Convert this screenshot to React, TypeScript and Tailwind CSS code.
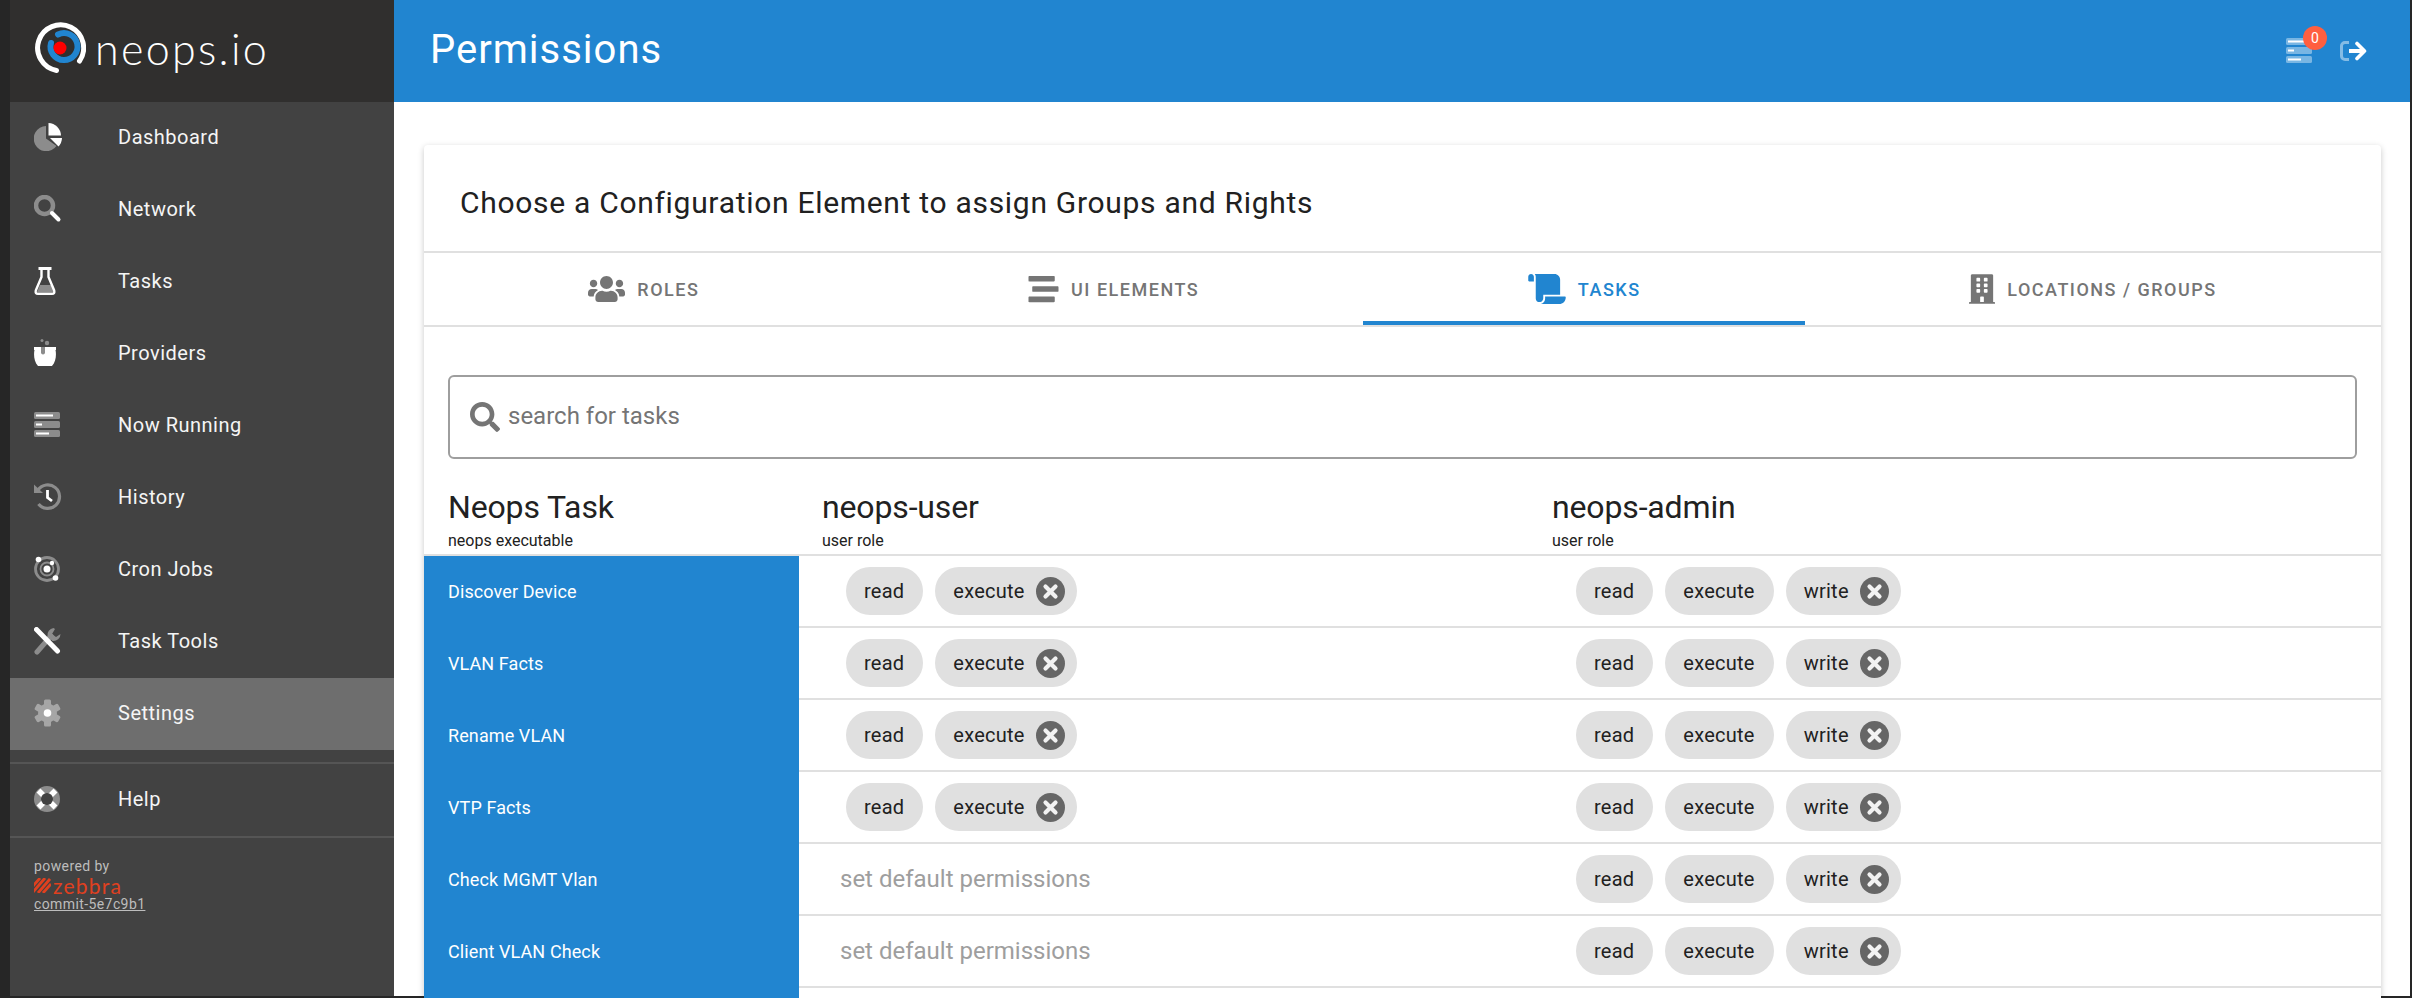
import type { ReactNode } from "react";
import { FaBuilding, FaScroll, FaSearch, FaStream, FaUsers } from "react-icons/fa";

const GRAY = "#8c8c8c";

const PieIcon = () => (
  <svg width="28" height="28" viewBox="0 0 28 28">
    <path d="M12 3A12.6 12.6 0 1 0 22.5 23L12 15.5Z" fill={GRAY} />
    <path d="M14.5 0A13 13 0 0 1 27 12.5L14.5 12.5Z" fill="#fff" />
    <path d="M16 15H28A13 13 0 0 1 24.500 23.500Z" fill="#fff" />
  </svg>
);

const SearchIcon = () => (
  <svg width="28" height="28" viewBox="0 0 28 28">
    <circle cx="10.500" cy="10.500" r="8.500" fill="none" stroke={GRAY} strokeWidth="4.500" />
    <path d="M18 18L24.500 24.500" stroke="#fff" strokeWidth="4" strokeLinecap="round" />
  </svg>
);

const FlaskIcon = () => (
  <svg width="28" height="28" viewBox="0 0 28 28">
    <path d="M6 18H18L21 25H3Z" fill={GRAY} />
    <rect x="4.500" y="0" width="13" height="3" fill="#fff" />
    <path
      d="M7.500 3V10L1.800 23.500Q1 26.800 4 26.800H18Q21 26.800 20.200 23.500L14.500 10V3"
      fill="none"
      stroke="#fff"
      strokeWidth="2.400"
    />
  </svg>
);

const CauldronIcon = () => (
  <svg width="28" height="28" viewBox="0 0 28 28">
    <circle cx="8" cy="1.500" r="1.500" fill={GRAY} />
    <circle cx="13" cy="4" r="2.200" fill={GRAY} />
    <path
      d="M0 8H22V11H21.500C22.500 15 22 23 18 27H4C0 23 -0.500 15 0.500 11H0Z"
      fill="#fff"
    />
    <path d="M7 8V13.500A2 2 0 0 0 11 13.500V8Z" fill={GRAY} />
  </svg>
);

const RunningIcon = ({ back, size = 28 }: { back: string; size?: number }) => (
  <svg width={size} height={size} viewBox="0 0 28 28">
    <rect x="0" y="1" width="26" height="7" rx="1.500" fill={back} />
    <rect x="0" y="10" width="26" height="7" rx="1.500" fill={back} />
    <rect x="0" y="19" width="26" height="7" rx="1.500" fill={back} />
    <rect x="2" y="3.500" width="17" height="2" fill="#fff" />
    <rect x="2" y="12.500" width="6" height="2" fill="#fff" />
    <rect x="2" y="21.500" width="13" height="2" fill="#fff" />
  </svg>
);

const HistoryIcon = () => (
  <svg width="28" height="28" viewBox="0 0 28 28">
    <path d="M4 7A11.800 11.800 0 1 1 4.500 21" fill="none" stroke={GRAY} strokeWidth="3.200" />
    <path d="M0 1.500L9 10H0Z" fill={GRAY} />
    <path d="M13.500 7V14.500L18 18" fill="none" stroke="#fff" strokeWidth="2.800" />
  </svg>
);

const OrbitIcon = () => (
  <svg width="28" height="28" viewBox="0 0 28 28">
    <circle cx="13" cy="14" r="11.500" fill="none" stroke={GRAY} strokeWidth="2.800" />
    <circle cx="13" cy="14" r="6.500" fill="none" stroke={GRAY} strokeWidth="1.800" />
    <circle cx="13" cy="14" r="3.500" fill="#fff" />
    <circle cx="4.500" cy="4.500" r="2.800" fill="#fff" />
    <circle cx="18" cy="8" r="2.200" fill="#fff" />
    <circle cx="21.500" cy="23" r="2.800" fill="#fff" />
  </svg>
);

const ToolsIcon = () => (
  <svg width="28" height="28" viewBox="0 0 28 28">
    <path d="M3 25L17 9" stroke={GRAY} strokeWidth="5" strokeLinecap="round" />
    <path d="M19.500 1A7 7 0 0 0 13.500 9L18.500 14A7 7 0 0 0 26.500 7L22 10L18 7L21 2Z" fill={GRAY} />
    <path d="M2.500 2.500L23.500 24" stroke="#fff" strokeWidth="5" strokeLinecap="round" />
  </svg>
);

const CogIcon = () => (
  <svg width="28" height="28" viewBox="0 0 28 28">
    {[0, 60, 120, 180, 240, 300].map((deg) => (
      <rect key={deg} x="10" y="0.500" width="7" height="7" rx="1.500" fill="#a6a6a6" transform={`rotate(${deg} 13.500 14)`} />
    ))}
    <circle cx="13.500" cy="14" r="9.500" fill="#a6a6a6" />
    <circle cx="13.500" cy="14" r="3.800" fill="#fff" />
  </svg>
);

const HelpIcon = () => (
  <svg width="28" height="28" viewBox="0 0 28 28">
    <circle cx="13" cy="14" r="13" fill={GRAY} />
    <path d="M4.500 5.500L21.500 22.500M21.500 5.500L4.500 22.500" stroke="#fff" strokeWidth="5.500" />
    <circle cx="13" cy="14" r="6" fill="#424242" />
  </svg>
);

const LogoMark = () => (
  <svg width="52" height="52" viewBox="0 0 52 52" className="shrink-0">
    <path d="M45.500 39A23 23 0 1 0 22.500 48.500" fill="none" stroke="#fff" strokeWidth="5" strokeLinecap="round" />
    <path d="M17 21A13.500 13.500 0 1 0 24 12.500" fill="none" stroke="#2185d0" strokeWidth="6" strokeLinecap="round" />
    <circle cx="26" cy="26" r="6.500" fill="#ff0000" />
  </svg>
);

const ZebbraMark = () => (
  <svg width="17" height="15" viewBox="0 0 17 15" className="shrink-0">
    <path d="M-1 8L6 0M-1 14L11 0M4 15L16 1M9 15L17 6" stroke="#e0401f" strokeWidth="2.800" />
  </svg>
);

const LogoutIcon = () => (
  <svg width="27" height="20" viewBox="0 0 27 20">
    <path d="M9 1.500H5A3.500 3.500 0 0 0 1.500 5V15A3.500 3.500 0 0 0 5 18.500H9" fill="none" stroke="rgba(255,255,255,0.45)" strokeWidth="3" />
    <path d="M9 10H23" stroke="#fff" strokeWidth="4" />
    <path d="M17 2.500L24.500 10L17 17.500" fill="none" stroke="#fff" strokeWidth="3.600" strokeLinecap="round" strokeLinejoin="round" />
  </svg>
);

const CloseIcon = () => (
  <svg width="29" height="29" viewBox="0 0 29 29" className="ml-[11px] shrink-0">
    <circle cx="14.500" cy="14.500" r="14.500" fill="#666666" />
    <path d="M9.500 9.500L19.500 19.500M19.500 9.500L9.500 19.500" stroke="#f2f2f2" strokeWidth="4.200" strokeLinecap="round" />
  </svg>
);

const navItems: { label: string; icon: ReactNode; active?: boolean }[] = [
  { label: "Dashboard", icon: <PieIcon /> },
  { label: "Network", icon: <SearchIcon /> },
  { label: "Tasks", icon: <FlaskIcon /> },
  { label: "Providers", icon: <CauldronIcon /> },
  { label: "Now Running", icon: <RunningIcon back={GRAY} /> },
  { label: "History", icon: <HistoryIcon /> },
  { label: "Cron Jobs", icon: <OrbitIcon /> },
  { label: "Task Tools", icon: <ToolsIcon /> },
  { label: "Settings", icon: <CogIcon />, active: true },
];

const NavItem = ({ label, icon, active }: { label: string; icon: ReactNode; active?: boolean }) => (
  <div className={`flex h-[72px] items-center pb-[2px] pl-6 ${active ? "bg-[#6e6e6e]" : ""}`}>
    <div className="flex w-[84px] shrink-0 items-center">{icon}</div>
    <span className="text-[20px] tracking-[0.5px] text-[#f5f5f5]">{label}</span>
  </div>
);

const Sidebar = () => (
  <aside className="flex w-[384px] shrink-0 flex-col bg-[#424242]">
    <div className="flex h-[102px] shrink-0 items-center bg-[#302f2e] pb-[6px] pl-6">
      <LogoMark />
      <span className="ml-[9px] font-[family-name:Lato,sans-serif] text-[43px] leading-none font-light tracking-[2.3px] text-white">
        neops.io
      </span>
    </div>
    {navItems.map((item) => (
      <NavItem key={item.label} {...item} />
    ))}
    <div className="mt-3 border-y-2 border-[#555555]">
      <NavItem label="Help" icon={<HelpIcon />} />
    </div>
    <div className="pt-[18px] pl-6 text-[14px] tracking-[0.4px] text-[#bdbdbd]">
      <div className="h-5 leading-5">powered by</div>
      <div className="flex h-[19px] items-center gap-[2px]">
        <ZebbraMark />
        <span className="font-[family-name:Lato,sans-serif] text-[21px] leading-none font-normal tracking-[1.2px] text-[#e0401f]">
          zebbra
        </span>
      </div>
      <div className="h-[19px] leading-[19px] underline">commit-5e7c9b1</div>
    </div>
  </aside>
);

const tabs = [
  { label: "Roles", icon: <FaUsers className="h-[30px] w-[37px]" /> },
  { label: "UI Elements", icon: <FaStream className="h-[30px] w-[31px]" /> },
  { label: "Tasks", icon: <FaScroll className="h-[30px] w-[38px]" />, active: true },
  { label: "Locations / Groups", icon: <FaBuilding className="h-[32px] w-[26px]" /> },
];

const Tabs = () => (
  <div className="flex h-[74px] border-b-2 border-[#e0e0e0]">
    {tabs.map((tab) => (
      <div
        key={tab.label}
        className={`flex grow items-center justify-center gap-3 text-[18px] font-medium tracking-[1.5px] uppercase ${
          tab.active ? "border-b-4 border-[#2185d0] pt-1 text-[#2185d0]" : "text-[#757575]"
        }`}
      >
        {tab.icon}
        <span>{tab.label}</span>
      </div>
    ))}
  </div>
);

const Chip = ({ label, close }: { label: string; close?: boolean }) => (
  <div
    className={`flex h-12 items-center rounded-full bg-[#e0e0e0] pl-[18px] text-[20px] tracking-[0.25px] text-[#212121] ${
      close ? "pr-3" : "pr-[19px]"
    }`}
  >
    {label}
    {close && <CloseIcon />}
  </div>
);

const Perms = ({ perms, className }: { perms?: string[]; className: string }) => (
  <div className={`flex items-center gap-3 ${className}`}>
    {perms ? (
      perms.map((p, i) => <Chip key={p} label={p} close={i === perms.length - 1} />)
    ) : (
      <span className="-ml-[6px] text-[24px] text-[#9e9e9e]">set default permissions</span>
    )}
  </div>
);

const userPerms = ["read", "execute"];
const adminPerms = ["read", "execute", "write"];

const rows = [
  { name: "Discover Device", user: userPerms },
  { name: "VLAN Facts", user: userPerms },
  { name: "Rename VLAN", user: userPerms },
  { name: "VTP Facts", user: userPerms },
  { name: "Check MGMT Vlan" },
  { name: "Client VLAN Check" },
];

const HeaderCell = ({ title, sub, className }: { title: string; sub: string; className: string }) => (
  <div className={className}>
    <div className="text-[32px] leading-[38px] tracking-[-0.15px] text-[#212121]">{title}</div>
    <div className="mt-[5px] text-[16px] leading-[20px] text-[#212121]">{sub}</div>
  </div>
);

const PermissionsTable = () => (
  <div>
    <div className="flex h-[72px] border-b-2 border-[#e0e0e0] pt-[4px]">
      <HeaderCell title="Neops Task" sub="neops executable" className="w-[375px] shrink-0 pl-6" />
      <HeaderCell title="neops-user" sub="user role" className="w-[729px] shrink-0 pl-[23px]" />
      <HeaderCell title="neops-admin" sub="user role" className="pl-6" />
    </div>
    {rows.map((row) => (
      <div key={row.name} className="flex h-[72px]">
        <div className="flex w-[375px] shrink-0 items-center bg-[#2185d0] pb-[2px] pl-6 text-[18px] tracking-[0.1px] text-white">
          {row.name}
        </div>
        <div className="flex flex-1 border-b-2 border-[#e0e0e0]">
          <Perms perms={row.user} className="w-[729px] shrink-0 pl-[47px]" />
          <Perms perms={adminPerms} className="pl-12" />
        </div>
      </div>
    ))}
    <div className="flex h-[72px]">
      <div className="w-[375px] shrink-0 bg-[#2185d0]" />
      <div className="flex-1" />
    </div>
  </div>
);

export default function App() {
  return (
    <div className="flex h-screen w-screen overflow-hidden bg-[#262626] pr-[2px] pb-[2px] pl-[10px] font-[family-name:Roboto,sans-serif]">
      <Sidebar />
      <main className="flex min-w-0 flex-1 flex-col bg-white">
        <header className="flex h-[102px] shrink-0 items-center justify-between bg-[#2185d0] pr-[43px] pl-9">
          <h1 className="pb-[2px] text-[40px] tracking-[1px] text-white">Permissions</h1>
          <div className="flex items-center gap-[26px]">
            <div className="relative">
              <RunningIcon back="rgba(255,255,255,0.4)" />
              <span className="absolute -top-[11px] -right-[13px] flex h-6 w-6 items-center justify-center rounded-full bg-[#ff5f40] text-[14px] text-white">
                0
              </span>
            </div>
            <LogoutIcon />
          </div>
        </header>
        <div className="min-h-0 flex-1 pt-[43px] pr-[29px] pl-[30px]">
          <div className="rounded-t-[4px] bg-white shadow-[0_2px_6px_rgba(0,0,0,0.22)]">
            <div className="flex h-[108px] items-center border-b-2 border-[#e0e0e0] pt-[9px] pl-9 text-[30px] tracking-[0.7px] text-[#212121]">
              Choose a Configuration Element to assign Groups and Rights
            </div>
            <Tabs />
            <div className="px-6 pt-12 pb-[25px]">
              <div className="flex h-[84px] items-center gap-[8px] rounded-[6px] border-2 border-[#9e9e9e] pb-[2px] pl-5">
                <FaSearch className="mt-[2px] h-[30px] w-[30px] text-[#757575]" />
                <span className="text-[24px] text-[#757575]">search for tasks</span>
              </div>
            </div>
            <PermissionsTable />
          </div>
        </div>
      </main>
    </div>
  );
}
